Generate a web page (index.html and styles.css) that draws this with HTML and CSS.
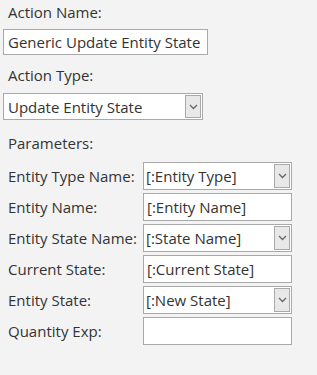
FILE: index.html
```html
<!DOCTYPE html>
<html lang="en">
<head>
  <meta charset="UTF-8">
  <meta name="viewport" content="width=device-width, initial-scale=1.0">
  <title>Action Editor</title>
  <link rel="stylesheet" href="styles.css">
</head>
<body>
  <div class="panel">
    <!-- 액션 이름 -->
    <div class="label top-label">Action Name:</div>
    <input class="field name-field" type="text" value="Generic Update Entity State">

    <!-- 액션 타입 -->
    <div class="label top-label">Action Type:</div>
    <div class="select type-select">
      <span class="select-text">Update Entity State</span>
      <span class="arrow"><svg width="9" height="6" viewBox="0 0 9 6"><path d="M1 1 L4.5 4.5 L8 1" fill="none" stroke="#666" stroke-width="1.3"/></svg></span>
    </div>

    <!-- 파라미터 -->
    <div class="label params-label">Parameters:</div>
    <div class="params">
      <div class="label">Entity Type Name:</div>
      <div class="select small">
        <span class="select-text">[:Entity Type]</span>
        <span class="arrow"><svg width="9" height="6" viewBox="0 0 9 6"><path d="M1 1 L4.5 4.5 L8 1" fill="none" stroke="#666" stroke-width="1.3"/></svg></span>
      </div>

      <div class="label">Entity Name:</div>
      <input class="field small" type="text" value="[:Entity Name]">

      <div class="label">Entity State Name:</div>
      <div class="select small">
        <span class="select-text">[:State Name]</span>
        <span class="arrow"><svg width="9" height="6" viewBox="0 0 9 6"><path d="M1 1 L4.5 4.5 L8 1" fill="none" stroke="#666" stroke-width="1.3"/></svg></span>
      </div>

      <div class="label">Current State:</div>
      <input class="field small" type="text" value="[:Current State]">

      <div class="label">Entity State:</div>
      <div class="select small">
        <span class="select-text">[:New State]</span>
        <span class="arrow"><svg width="9" height="6" viewBox="0 0 9 6"><path d="M1 1 L4.5 4.5 L8 1" fill="none" stroke="#666" stroke-width="1.3"/></svg></span>
      </div>

      <div class="label">Quantity Exp:</div>
      <input class="field small" type="text" value="">
    </div>
  </div>
</body>
</html>
```

FILE: styles.css
```css
html, body {
  margin: 0;
  background: #f3f3f3;
}

body {
  font-family: "Open Sans", "Noto Sans", sans-serif;
  font-size: 15px;
  color: #333;
}

.panel {
  padding: 2px 0 0 3px;
  display: flex;
  flex-direction: column;
  align-items: flex-start;
}

.label {
  line-height: 20px;
  padding-left: 5px;
  white-space: nowrap;
}

.top-label {
  margin-bottom: 7px;
}

.field {
  box-sizing: border-box;
  margin: 0;
  border: 1px solid #a9a9a9;
  background: #fff;
  font-family: inherit;
  font-size: 15px;
  color: #333;
  padding: 0 5px;
  outline: none;
}

.name-field {
  width: 205px;
  height: 26px;
  margin-bottom: 10px;
  padding: 0 2px 0 4px;
}

.select {
  box-sizing: border-box;
  display: flex;
  align-items: center;
  justify-content: space-between;
  border: 1px solid #a9a9a9;
  background: #fff;
  padding: 1px 1px 1px 4px;
}

.type-select {
  width: 200px;
  height: 27px;
  margin-top: 1px;
  margin-bottom: 13px;
}

.arrow {
  box-sizing: border-box;
  width: 16px;
  height: 100%;
  display: flex;
  align-items: center;
  justify-content: center;
  background: #e8e8e8;
  border: 1px solid #a9a9a9;
}

.params-label {
  margin-bottom: 9px;
}

.params {
  display: grid;
  grid-template-columns: 140px 149px;
  row-gap: 3px;
  align-items: center;
}

.small {
  width: 149px;
  height: 28px;
}

.select.small {
  padding-left: 2px;
}

input.small {
  padding-left: 3px;
}
```
